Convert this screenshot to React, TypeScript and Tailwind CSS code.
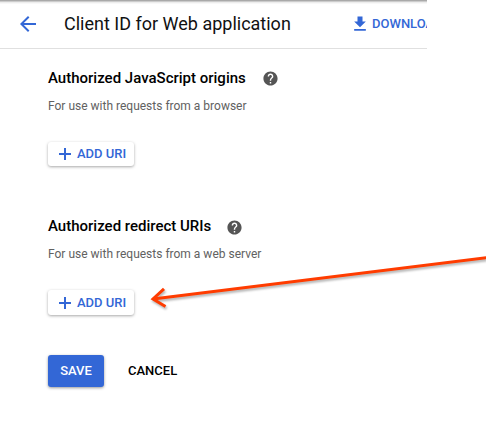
import React from 'react';

function HelpIcon({ className = '' }: { className?: string }) {
  return (
    <svg viewBox="0 0 24 24" className={`size-[17px] fill-[#555555] ${className}`}>
      <path d="M12 2C6.48 2 2 6.48 2 12s4.48 10 10 10 10-4.48 10-10S17.52 2 12 2zm1 17h-2v-2h2v2zm2.07-7.75l-.9.92C13.45 12.9 13 13.5 13 15h-2v-.5c0-1.1.45-2.1 1.17-2.83l1.24-1.26c.37-.36.59-.86.59-1.41 0-1.1-.9-2-2-2s-2 .9-2 2H8c0-2.21 1.79-4 4-4s4 1.79 4 4c0 .88-.36 1.68-.93 2.25z" />
    </svg>
  );
}

function AddButton({ className = '' }: { className?: string }) {
  return (
    <button
      className={`flex w-[86px] items-center rounded-[3px] bg-white pl-[11px] text-[13px] font-medium text-[#3367d6] shadow-[0_1px_3px_rgba(0,0,0,0.35)] ${className}`}
    >
      <svg viewBox="0 0 12 12" className="mr-1.5 size-3 shrink-0 fill-[#3367d6]">
        <path d="M5 0h2v5h5v2H7v5H5V7H0V5h5z" />
      </svg>
      <span className="whitespace-nowrap">ADD URI</span>
    </button>
  );
}

function Section({ title, hint, iconClass, buttonClass }: { title: string; hint: string; iconClass: string; buttonClass: string }) {
  return (
    <section className="h-[148px]">
      <div className="flex h-5 items-center">
        <h2 className="text-[15px] leading-5 font-medium text-black">{title}</h2>
        <HelpIcon className={iconClass} />
      </div>
      <p className="mt-[10px] text-[12px] leading-4 text-[#616161]">{hint}</p>
      <AddButton className={buttonClass} />
    </section>
  );
}

export default function App() {
  return (
    <div className="relative h-[436px] w-[486px] overflow-hidden bg-white font-['Roboto',sans-serif]">
      <header className="flex h-[49px] w-[427px] items-center overflow-hidden border-b border-b-[#e0e0e0] bg-[linear-gradient(#a9a9a9_0_1px,#cccccc_1px_2px,#ededed_2px_3px,#f8f8f8_3px_4px,#ffffff_4px)] pl-4">
        <svg viewBox="0 0 24 24" className="size-6 shrink-0 fill-[#3367d6]">
          <path d="M20 11H7.83l5.59-5.59L12 4l-8 8 8 8 1.41-1.41L7.83 13H20v-2z" />
        </svg>
        <h1 className="ml-6 w-[286px] shrink-0 text-[18px] leading-6 whitespace-nowrap text-[#111111]">Client ID for Web application</h1>
        <svg viewBox="0 0 24 24" className="size-5 shrink-0 fill-[#3367d6]">
          <path d="M19 9h-4V3H9v6H5l7 7 7-7zM5 18v2h14v-2H5z" />
        </svg>
        <span className="ml-0.5 w-[55px] shrink-0 overflow-hidden text-[13px] leading-5 font-medium whitespace-nowrap text-[#3367d6]">DOWNLOAD</span>
      </header>
      <main className="pt-[19px] pl-12">
        <Section title="Authorized JavaScript origins" hint="For use with requests from a browser" iconClass="ml-4" buttonClass="mt-7 h-6" />
        <Section title="Authorized redirect URIs" hint="For use with requests from a web server" iconClass="ml-[15px] mt-0.5" buttonClass="mt-7 h-[25px]" />
        <div className="-mt-[9px] flex text-[13px] font-medium">
          <button className="h-8 w-14 rounded-[3px] bg-[#3367d6] text-white shadow-[0_1px_3px_rgba(0,0,0,0.4)]">SAVE</button>
          <button className="ml-6 text-black">CANCEL</button>
        </div>
      </main>
      <svg viewBox="0 0 346 80" className="absolute top-[240px] left-[140px] h-20 w-[346px] fill-none stroke-[#ff3c00] stroke-[3] drop-shadow-[1px_2px_1px_rgba(0,0,0,0.3)]">
        <path d="M13 59 348 17.6" />
        <path d="M24 48.8 13 59 25.5 66.5" />
      </svg>
    </div>
  );
}
